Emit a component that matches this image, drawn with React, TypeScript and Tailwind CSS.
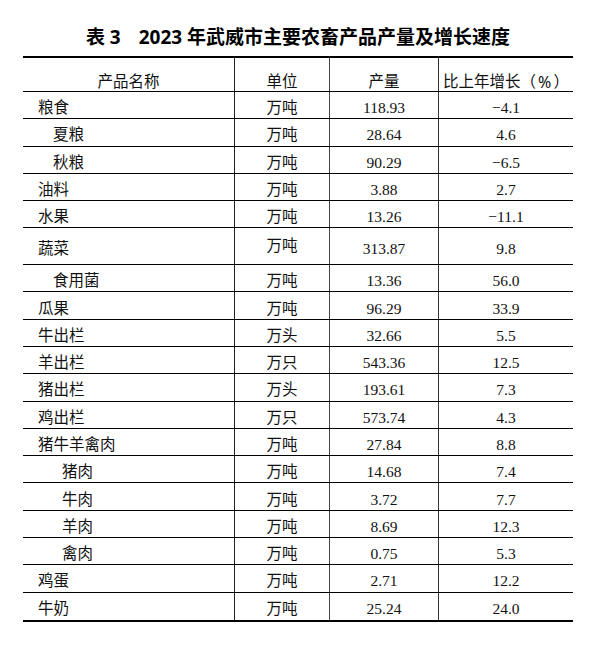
type Row = {
  name: string;
  level: 0 | 1 | 2;
  unit: string;
  output: string;
  growth: string;
  tall?: boolean;
};

const rows: Row[] = [
  { name: "粮食", level: 0, unit: "万吨", output: "118.93", growth: "−4.1" },
  { name: "夏粮", level: 1, unit: "万吨", output: "28.64", growth: "4.6" },
  { name: "秋粮", level: 1, unit: "万吨", output: "90.29", growth: "−6.5" },
  { name: "油料", level: 0, unit: "万吨", output: "3.88", growth: "2.7" },
  { name: "水果", level: 0, unit: "万吨", output: "13.26", growth: "−11.1" },
  { name: "蔬菜", level: 0, unit: "万吨", output: "313.87", growth: "9.8", tall: true },
  { name: "食用菌", level: 1, unit: "万吨", output: "13.36", growth: "56.0" },
  { name: "瓜果", level: 0, unit: "万吨", output: "96.29", growth: "33.9" },
  { name: "牛出栏", level: 0, unit: "万头", output: "32.66", growth: "5.5" },
  { name: "羊出栏", level: 0, unit: "万只", output: "543.36", growth: "12.5" },
  { name: "猪出栏", level: 0, unit: "万头", output: "193.61", growth: "7.3" },
  { name: "鸡出栏", level: 0, unit: "万只", output: "573.74", growth: "4.3" },
  { name: "猪牛羊禽肉", level: 0, unit: "万吨", output: "27.84", growth: "8.8" },
  { name: "猪肉", level: 2, unit: "万吨", output: "14.68", growth: "7.4" },
  { name: "牛肉", level: 2, unit: "万吨", output: "3.72", growth: "7.7" },
  { name: "羊肉", level: 2, unit: "万吨", output: "8.69", growth: "12.3" },
  { name: "禽肉", level: 2, unit: "万吨", output: "0.75", growth: "5.3" },
  { name: "鸡蛋", level: 0, unit: "万吨", output: "2.71", growth: "12.2" },
  { name: "牛奶", level: 0, unit: "万吨", output: "25.24", growth: "24.0" },
];

const indent = ["pl-[15px]", "pl-[30px]", "pl-[39px]"];

export default function App() {
  return (
    <div
      className="w-[610px] h-[654px] bg-white text-[#111] pt-[25px]"
      style={{ fontFamily: '"Liberation Serif", "Noto Sans CJK SC", serif' }}
    >
      {/* Title */}
      <h1
        className="ml-[23px] w-[550px] text-center text-[19px] font-bold leading-[24px] text-black"
        style={{ fontFamily: '"Noto Sans", "Noto Sans CJK SC", sans-serif' }}
      >
        <span>表 3</span>
        <span className="ml-[18px]">2023 年武威市主要农畜产品产量及增长速度</span>
      </h1>

      {/* Table */}
      <div className="ml-[23px] mt-[7px] w-[550px] border-t-2 border-b-2 border-black text-[15.5px]">
        <div className="flex h-[34px] border-b border-black leading-[20px]">
          <div className="w-[212px] border-r border-[#222] flex items-center justify-center pt-[14px]">
            产品名称
          </div>
          <div className="w-[95px] border-r border-[#444] flex items-center justify-center pt-[14px]">
            单位
          </div>
          <div className="w-[109px] border-r border-[#333] flex items-center justify-center pt-[14px]">
            产量
          </div>
          <div className="flex-1 flex items-center justify-center pt-[14px] whitespace-nowrap">
            比上年增长（
            <span
              className="mx-[2px] text-[16px]"
              style={{ fontFamily: '"Noto Sans", sans-serif' }}
            >
              %
            </span>
            ）
          </div>
        </div>

        {rows.map((r, i) => (
          <div
            key={r.name}
            className={`flex leading-[20px] ${r.tall ? "h-[36.6px]" : "h-[27.3px]"} ${
              i < rows.length - 1 ? "border-b border-black" : ""
            }`}
          >
            <div
              className={`w-[212px] border-r border-[#222] flex items-center pt-[6px] ${indent[r.level]}`}
            >
              {r.name}
            </div>
            <div
              className={`w-[95px] border-r border-[#444] flex justify-center ${
                r.tall ? "items-start pt-[8px]" : "items-center pt-[6px]"
              }`}
            >
              {r.unit}
            </div>
            <div className="w-[109px] border-r border-[#333] flex items-center justify-center pt-[6px]">
              {r.output}
            </div>
            <div className="flex-1 flex items-center justify-center pt-[6px]">{r.growth}</div>
          </div>
        ))}
      </div>
    </div>
  );
}
